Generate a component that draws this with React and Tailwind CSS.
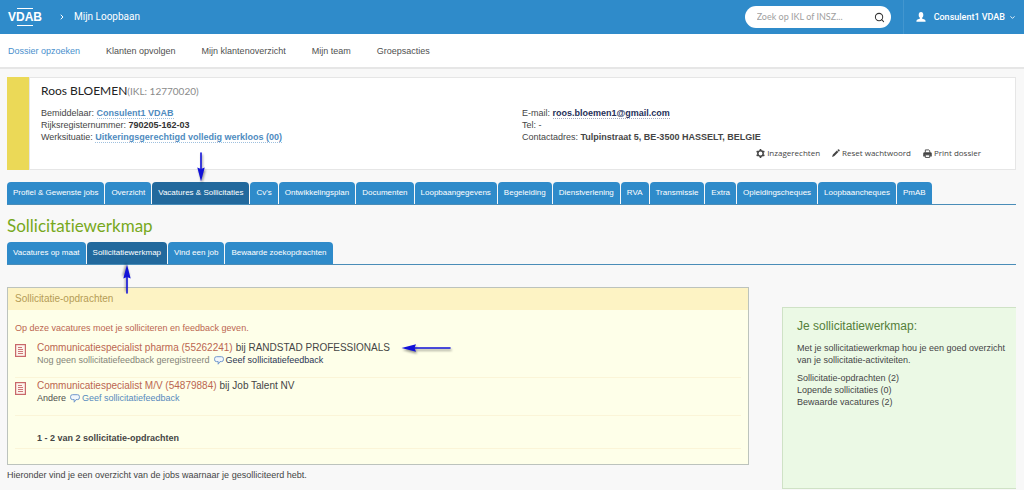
import React, { useState } from 'react';
import { ChevronDown, ChevronRight, Search } from 'lucide-react';
import { clsx } from 'clsx';

const navItems = ['Dossier opzoeken', 'Klanten opvolgen', 'Mijn klantenoverzicht', 'Mijn team', 'Groepsacties'];

const dossierTabs = [
    'Profiel & Gewenste jobs', 'Overzicht', 'Vacatures & Sollicitaties', "Cv's", 'Ontwikkelingsplan',
    'Documenten', 'Loopbaangegevens', 'Begeleiding', 'Dienstverlening', 'RVA', 'Transmissie', 'Extra',
    'Opleidingscheques', 'Loopbaancheques', 'PmAB'
];

const werkmapTabs = ['Vacatures op maat', 'Sollicitatiewerkmap', 'Vind een job', 'Bewaarde zoekopdrachten'];

const opdrachten = [
    {
        titel: 'Communicatiespecialist pharma (55262241)',
        bedrijf: 'RANDSTAD PROFESSIONALS',
        status: 'Nog geen sollicitatiefeedback geregistreerd',
        statusClass: 'text-[#858578]',
        linkClass: 'text-[#2b3553]',
        pijl: true
    },
    {
        titel: 'Communicatiespecialist M/V (54879884)',
        bedrijf: 'Job Talent NV',
        status: 'Andere',
        statusClass: 'text-[#50504c]',
        linkClass: 'text-[#5689bd]',
        pijl: false
    }
];

function Logo() {
    return (
        <span className="flex flex-col items-center gap-0.5 text-white">
            <span className="h-px w-4 bg-white" />
            <span className="text-[12px] leading-3 font-bold">VDAB</span>
            <span className="h-px w-4 bg-white" />
        </span>
    );
}

function Arrow({ className }) {
    return (
        <svg viewBox="0 0 10 30" className={clsx('h-[30px] w-[10px] overflow-visible drop-shadow-[1px_2px_1px_rgba(0,0,0,0.4)]', className)} aria-hidden="true">
            <path d="M5 1V20" stroke="#1212d8" strokeWidth="1.6" strokeLinecap="round" />
            <path d="M1.3 15.5L5 17L8.7 15.5L5 29.5Z" fill="#1212d8" />
        </svg>
    );
}

function ArrowLeftLong() {
    return (
        <svg viewBox="0 0 50 10" className="h-[10px] w-[50px] overflow-visible drop-shadow-[1px_2px_1px_rgba(0,0,0,0.4)]" aria-hidden="true">
            <path d="M10 5H49" stroke="#1212d8" strokeWidth="1.6" strokeLinecap="round" />
            <path d="M15 1.3L13.5 5L15 8.7L0.5 5Z" fill="#1212d8" />
        </svg>
    );
}

function UserIcon() {
    return (
        <svg viewBox="0 0 10 10" className="size-[10px]" fill="currentColor" aria-hidden="true">
            <ellipse cx="5" cy="3" rx="2.3" ry="3" />
            <path d="M4 5H6V6.6L9 7.8Q9.6 8.1 9.6 9.8H.4Q.4 8.1 1 7.8L4 6.6Z" />
        </svg>
    );
}

function GearIcon() {
    return (
        <svg viewBox="0 0 10 10" className="size-[9px]" fill="none" stroke="currentColor" aria-hidden="true">
            <circle cx="5" cy="5" r="3" strokeWidth="1.7" />
            <path d="M5 0V1.5M5 8.5V10M.7 2.5L2 3.3M8 6.7L9.3 7.5M.7 7.5L2 6.7M8 3.3L9.3 2.5" strokeWidth="1.8" />
        </svg>
    );
}

function PencilIcon() {
    return (
        <svg viewBox="0 0 10 10" className="size-2" fill="currentColor" aria-hidden="true">
            <path d="M7.6.6Q8.2 0 8.8.6L9.5 1.3Q10 1.9 9.4 2.5L8.6 3.3L6.7 1.4ZM6.1 2L8 3.9L3 8.8L0 10L1.1 7Z" />
        </svg>
    );
}

function PrintIcon() {
    return (
        <svg viewBox="0 0 10 10" className="size-[9px]" fill="none" stroke="currentColor" aria-hidden="true">
            <path d="M2.6 4V1H6.5L7.5 2V4" strokeWidth="1" />
            <path d="M.5 8V5Q.5 4 1.5 4H8.5Q9.5 4 9.5 5V8H8V6.5H2V8Z" fill="currentColor" strokeWidth=".6" />
            <path d="M2.6 6.5H7.4V9.4H2.6Z" fill="white" strokeWidth="1" />
        </svg>
    );
}

function DocumentIcon() {
    return (
        <svg viewBox="0 0 11 13" className="mt-0.5 h-[13px] w-[11px] shrink-0" fill="none" stroke="#c8686a" aria-hidden="true">
            <rect x=".6" y=".6" width="9.8" height="11.8" fill="#fdf4ec" strokeWidth="1.2" />
            <path d="M3 3.5H7M3 5.5H8M3 7.5H8M3 9.5H8" strokeWidth=".9" />
        </svg>
    );
}

function BalloonIcon() {
    return (
        <svg viewBox="0 0 10 9" className="h-[9px] w-[10px]" fill="#f2f7fb" stroke="#6f96cc" aria-hidden="true">
            <path d="M2.5.7H7.5Q9.4.7 9.4 2.5V3.8Q9.4 5.6 7.5 5.6H6L4.2 8.2V5.6H2.5Q.6 5.6 .6 3.8V2.5Q.6.7 2.5.7Z" />
        </svg>
    );
}

function Tabs({ label, items, active, onSelect, arrow }) {
    return (
        <nav aria-label={label} className="flex gap-px border-b border-[#4a8db8] text-[8px] leading-[22px] text-white">
            {items.map(item => (
                <a
                    key={item}
                    href="#"
                    onClick={() => onSelect(item)}
                    aria-current={item === active ? 'page' : undefined}
                    className={clsx(
                        'relative rounded-t-[4px] px-1.5 whitespace-nowrap',
                        item === active ? 'bg-[#22699d]' : 'bg-[#2f8bca]'
                    )}
                >
                    {item}
                    {item === active && arrow === 'down' && <Arrow className="absolute bottom-full left-1/2 -translate-x-1/2" />}
                    {item === active && arrow === 'up' && <Arrow className="absolute top-full left-1/2 -translate-x-1/2 rotate-180" />}
                </a>
            ))}
        </nav>
    );
}

export default function App() {
    const [dossierTab, setDossierTab] = useState('Vacatures & Sollicitaties');
    const [werkmapTab, setWerkmapTab] = useState('Sollicitatiewerkmap');
    const [zoekterm, setZoekterm] = useState('');

    return (
        <div className="min-h-screen overflow-hidden bg-[#f8f8f8] font-['Liberation_Sans',Arial,sans-serif] text-[9px] leading-3 text-[#454545]">

            {/* Header */}
            <header className="flex h-[34px] items-center bg-[#2f8bca] pl-2 text-white">
                <a href="#" aria-label="VDAB"><Logo /></a>
                <ChevronRight size={8} strokeWidth={3} className="ml-4 shrink-0" />
                <a href="#" className="ml-2 font-['Roboto',sans-serif] text-[10px]">Mijn Loopbaan</a>

                <form onSubmit={e => e.preventDefault()} className="ml-auto flex h-[22px] w-[146px] items-center rounded-full bg-white pr-1.5 pl-3">
                    <input
                        type="search"
                        aria-label="Zoeken"
                        value={zoekterm}
                        onChange={e => setZoekterm(e.target.value)}
                        placeholder="Zoek op IKL of INSZ..."
                        className="min-w-0 flex-1 font-['Lato',sans-serif] text-[9px] text-[#454545] outline-none placeholder:text-[#a0a0a0]"
                    />
                    <button type="submit" aria-label="Zoek" className="text-[#333]">
                        <Search size={11} strokeWidth={2.2} />
                    </button>
                </form>

                <button type="button" className="ml-3 flex h-full items-center border-l border-[#4296cf] pr-2 pl-3 font-['Roboto',sans-serif] text-[9px] font-medium">
                    <UserIcon />
                    <span className="ml-2">Consulent1 VDAB</span>
                    <ChevronDown size={7} strokeWidth={3} className="ml-1" />
                </button>
            </header>

            <nav aria-label="Hoofdnavigatie" className="flex h-[35px] items-center gap-[26px] border-b-2 border-[#e6e6e6] bg-white pl-2">
                {navItems.map((item, i) => (
                    <a key={item} href="#" className={i === 0 ? 'text-[#4a90cd]' : 'text-[#505050]'}>{item}</a>
                ))}
            </nav>

            <main className="pr-2 pl-[7px]">

                {/* Klantgegevens */}
                <section className="mt-2 flex">
                    <div className="w-[22px] bg-[#ebd957]" />
                    <div className="flex-1 border border-[#e6e6e6] bg-white pt-1 pb-2.5 pl-[11px]">
                        <h1 className="font-['Lato',sans-serif] text-[12px] leading-[18px] text-[#222]">
                            Roos BLOEMEN<span className="text-[10px] text-[#8a8a8a]">(IKL: 12770020)</span>
                        </h1>
                        <div className="mt-[7px] flex pr-3">
                            <div className="flex-1">
                                <p>Bemiddelaar: <a href="#" className="border-b border-dotted border-[#9fc0de] font-bold text-[#4f8bc0]">Consulent1 VDAB</a></p>
                                <p>Rijksregisternummer: <b className="text-[#333]">790205-162-03</b></p>
                                <p>Werksituatie: <a href="#" className="border-b border-dotted border-[#9fc0de] font-bold text-[#4f8bc0]">Uitkeringsgerechtigd volledig werkloos (00)</a></p>
                            </div>
                            <div className="flex-1">
                                <p>E-mail: <a href="#" className="border-b border-dotted border-[#a5aabf] font-bold text-[#26305a]">roos.bloemen1@gmail.com</a></p>
                                <p>Tel: -</p>
                                <p>Contactadres: <b>Tulpinstraat 5, BE-3500 HASSELT, BELGIE</b></p>
                            </div>
                        </div>
                        <div className="mt-1 flex justify-end gap-3 pr-[34px] font-['Open_Sans',sans-serif] text-[8px]">
                            <button type="button" className="flex items-center gap-0.5"><GearIcon /> Inzagerechten</button>
                            <button type="button" className="flex items-center gap-0.5"><PencilIcon /> Reset wachtwoord</button>
                            <button type="button" className="flex items-center gap-0.5"><PrintIcon /> Print dossier</button>
                        </div>
                    </div>
                </section>

                <div className="mt-3">
                    <Tabs label="Dossier" items={dossierTabs} active={dossierTab} onSelect={setDossierTab} arrow="down" />
                </div>

                <h2 className="mt-2.5 mb-[5px] font-['Lato',sans-serif] text-[17px] leading-[22px] text-[#77a820] [font-variant-ligatures:none]">Sollicitatiewerkmap</h2>

                <Tabs label="Werkmap" items={werkmapTabs} active={werkmapTab} onSelect={setWerkmapTab} arrow="up" />

                <div className="mt-[22px] flex items-start gap-[33px]">

                    {/* Sollicitatie-opdrachten */}
                    <div className="min-w-0 flex-1">
                        <section className="border border-[#bcc3bd] bg-[#feffe9]">
                            <h3 className="bg-[#fdf3c4] px-[7px] text-[10px] leading-[22px] text-[#b59c56]">Sollicitatie-opdrachten</h3>
                            <div className="px-[7px] pt-3 pb-[15px]">
                                <p className="mb-1.5 text-[#bb6650]">Op deze vacatures moet je solliciteren en feedback geven.</p>
                                <ul>
                                    {opdrachten.map(o => (
                                        <li key={o.titel} className="flex gap-[11px] border-b border-[#fbf5d8] pt-0.5 pb-[11px]">
                                            <DocumentIcon />
                                            <div>
                                                <p className="flex items-center gap-[3px] text-[10px]">
                                                    <a href="#" className="text-[#bb6650]">{o.titel}</a>
                                                    <span>bij {o.bedrijf}</span>
                                                    {o.pijl && <span className="ml-2"><ArrowLeftLong /></span>}
                                                </p>
                                                <p className="flex items-center gap-1">
                                                    <span className={o.statusClass}>{o.status}</span>
                                                    <a href="#" className={clsx('flex items-center gap-0.5', o.linkClass)}>
                                                        <BalloonIcon /> Geef sollicitatiefeedback
                                                    </a>
                                                </p>
                                            </div>
                                        </li>
                                    ))}
                                </ul>
                                <p className="border-b border-[#fbf5d8] pt-4 pb-1 pl-[22px] font-bold">1 - 2 van 2 sollicitatie-opdrachten</p>
                            </div>
                        </section>
                        <p className="mt-1">Hieronder vind je een overzicht van de jobs waarnaar je gesolliciteerd hebt.</p>
                    </div>

                    <aside className="mt-5 min-h-[182px] w-[234px] shrink-0 border-y border-l border-[#cfe2c6] bg-[#ebf9e5] pt-2.5 pl-3.5">
                        <h3 className="text-[12px] leading-4 text-[#55803a]">Je sollicitatiewerkmap:</h3>
                        <p className="mt-2">Met je sollicitatiewerkmap hou je een goed overzicht van je sollicitatie-activiteiten.</p>
                        <ul className="mt-1.5">
                            <li>Sollicitatie-opdrachten (2)</li>
                            <li>Lopende sollicitaties (0)</li>
                            <li>Bewaarde vacatures (2)</li>
                        </ul>
                    </aside>
                </div>
            </main>
        </div>
    );
}
